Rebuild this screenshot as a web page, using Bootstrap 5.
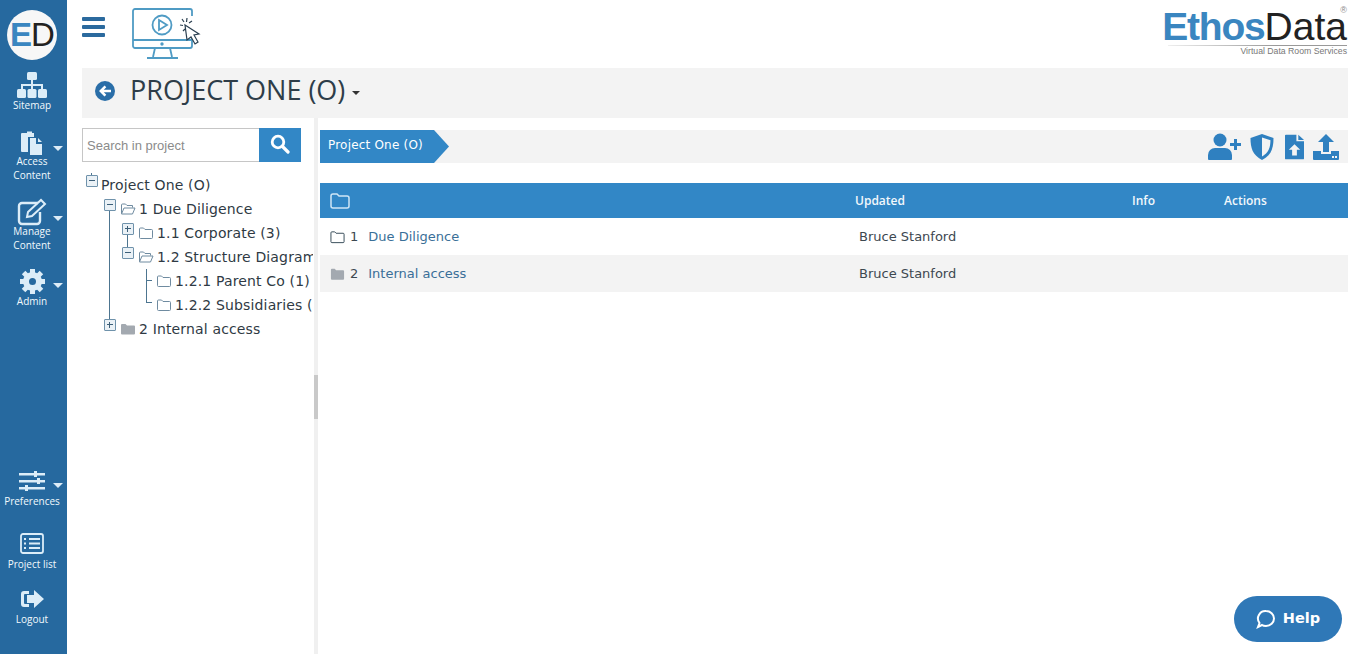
<!DOCTYPE html>
<html lang="en">
<head>
<meta charset="utf-8">
<title>Project One</title>
<link href="https://cdn.jsdelivr.net/npm/bootstrap@5.3.0/dist/css/bootstrap.min.css" rel="stylesheet">
<style>
html,body{height:100%;overflow:hidden}
body{background:#fff;font-family:"Open Sans",sans-serif;color:#333}
.shell{height:654px}
.side{width:67px;background:#26699f;color:#e6f3fb;flex:none;padding-top:10px}
.ed-logo{width:50px;height:50px;border-radius:50%;background:#f7f7f7;margin-left:7px;font-family:"Liberation Sans",sans-serif;font-size:33px;line-height:50px;text-align:center;letter-spacing:-1px;color:#222}
.ed-logo b{color:#3a86c0;font-weight:700}
.s-item{width:64px;position:relative;text-align:center;font-size:10px;font-weight:400;line-height:14px;color:#f2f9fd;text-decoration:none;display:block}
.s-item svg{display:block;margin:0 auto}
.s-lab{display:block}
.s-caret{position:absolute;right:1px;width:0;height:0;border-left:5px solid transparent;border-right:5px solid transparent;border-top:5px solid #dcecf7}
.i1{margin-top:12px}
.i2{margin-top:18px}.i3{margin-top:16px}.i4{margin-top:17px}
.i2 .s-lab,.i3 .s-lab{margin-top:-2px}
.i5 .s-lab{margin-top:2px}
.i6{margin-top:25px}.i7{margin-top:18px;margin-bottom:28px}
.i6 .s-lab,.i7 .s-lab{margin-top:3px}
.s-spacer{flex:1}
.main{flex:1;min-width:0;padding:0 14px 0 15px}
.topbar{height:68px}
.burger{width:23px;margin-top:17px}
.burger i{display:block;height:4px;background:#2b6a9e;margin-bottom:4px;border-radius:1px}
.monitor{margin:8px 0 0 27px}
.brand{margin-top:7px;text-align:right;font-family:"Liberation Sans",sans-serif;width:190px;padding-right:1px}
.brand-reg{display:block;font-size:9px;line-height:6px;height:6px;color:#888}
.brand-name{font-size:39px;line-height:28px;color:#222;height:33px;position:relative}
.brand-name::after{content:"";position:absolute;left:10px;right:0;bottom:0;height:1px;background:linear-gradient(90deg,#eee,#999 60%)}
.brand-name b{color:#3a86c0;letter-spacing:-1.2px}
.brand-sub{font-size:8.7px;line-height:10px;color:#777}
.titlebar{height:50px;background:#f3f3f3;padding:0 0 4px 13px}
.titlebar h1{font-size:27px;margin:0 0 2px 15px;font-weight:400;color:#2e3d49;font-family:"Open Sans",sans-serif}
.t-caret{width:0;height:0;border-left:4px solid transparent;border-right:4px solid transparent;border-top:4px solid #333;margin:4px 0 0 7px}
.work{height:536px}
.left{width:232px;flex:none;padding-top:10px;overflow:hidden}
.split{width:4px;background:#f0f0f0;flex:none;position:relative;margin-right:2px}
.split i{position:absolute;left:0;top:257px;width:4px;height:44px;background:#c9c9c9}
.searchbox{width:219px;height:34px}
.searchbox input{width:177px;height:34px;border:1px solid #c6c6c6;border-right:0;padding:0 4px;font-family:"Liberation Sans",sans-serif;font-size:13px;border-radius:0;outline:0}
.searchbox input::placeholder{color:#8b8b8b;opacity:1}
.searchbox button{width:42px;height:34px;background:#3287c6;border:0;border-radius:0;padding:0 0 2px}
.searchbox button svg{display:block;margin:0 auto}
.tree{margin-top:11px;font-family:"DejaVu Sans",sans-serif;font-size:14px;letter-spacing:.15px;color:#2f3a44;white-space:nowrap;position:relative;width:231px;overflow:hidden}
.t-row{height:24px;display:flex;align-items:center;position:relative}
.lv0{padding-left:4px}.lv1{padding-left:22px}.lv2{padding-left:40px}.lv3{padding-left:74px}
.tog{width:12px;height:12px;border:1px solid #6f92ab;border-radius:1px;background:#eaf1f6;position:relative;top:-4px;margin-right:4px;flex:none}
.tog::before{content:"";position:absolute;left:2px;right:2px;top:4px;height:1px;background:#3c5f78}
.tog.pl::after{content:"";position:absolute;top:2px;bottom:2px;left:4px;width:1px;background:#3c5f78}
.fold{margin-right:3px;flex:none}
.lv0 .tog{margin-right:3px}
.ln{position:absolute;background:#4d7590}
.right{flex:1;min-width:0;padding-top:12px}
.crumb{height:33px;background:#f3f3f3}
.crumb-p{background:#3287c6;color:#fff;height:33px;width:129px;font-family:"DejaVu Sans",sans-serif;font-size:12px;letter-spacing:.2px;line-height:30px;padding-left:8px;clip-path:polygon(0 0,114px 0,100% 50%,114px 100%,0 100%)}
.tools{padding-right:8px;gap:8px}
.t-user{margin-right:1px}.t-shield{margin-right:3px}
.gridtbl{margin:20px 0 0;table-layout:fixed;width:100%;border-collapse:collapse}
.gridtbl th{background:#3287c6;color:#f2f8fc;font-weight:600;font-size:12px;height:35px;padding:0 0 0 8px;border:0;vertical-align:middle}
.gridtbl td{height:37px;padding:0 0 0 12px;border:0;font-family:"DejaVu Sans",sans-serif;font-size:13px;color:#3d4850;vertical-align:middle;background:#fff}
.gridtbl tr.alt td{background:#f3f3f3}
.gridtbl td.nm{padding-left:10px}
.gridtbl a{color:#3a6f98;text-decoration:none;margin-left:10px}
.gridtbl td svg{vertical-align:-3px;margin-right:5px}
.helpbtn{position:fixed;left:1234px;top:596px;width:108px;height:46px;border-radius:23px;background:#2f78b7;color:#fff;font-family:"DejaVu Sans",sans-serif;font-weight:700;font-size:14.5px;border:0;gap:7px}
</style>
</head>
<body>
<div class="shell d-flex">
<nav class="side d-flex flex-column">
  <div class="ed-logo"><b>E</b>D</div>
  <a class="s-item i1" href="#">
    <svg width="32" height="26" viewBox="0 0 32 26" fill="#dcedf8"><rect x="11" y="0" width="10" height="8" rx="1.5"/><path d="M15 8h2v4h10v5h-2v-3H17v3h-2v-3H7v3H5v-5h10z"/><rect x="1" y="17" width="9" height="9" rx="1.5"/><rect x="11.5" y="17" width="9" height="9" rx="1.5"/><rect x="22" y="17" width="9" height="9" rx="1.5"/></svg>
    <span class="s-lab">Sitemap</span></a>
  <a class="s-item i2" href="#">
    <svg width="24" height="26" viewBox="0 0 24 26" fill="#dcedf8"><path d="M2 3h5V1.500h5V3h2v4H8v15H2a1 1 0 0 1-1-1V4a1 1 0 0 1 1-1z"/><path d="M10 8h6v6h6v11H10z"/><path d="M18 8l4 4h-4z"/></svg>
    <span class="s-lab">Access<br>Content</span>
    <i class="s-caret" style="top:16px"></i></a>
  <a class="s-item i3" href="#">
    <svg width="30" height="28" viewBox="0 0 30 28" fill="none" stroke="#dcedf8" stroke-width="2.400"><path d="M21 5H5a3 3 0 0 0-3 3v15a3 3 0 0 0 3 3h15a3 3 0 0 0 3-3V14"/><path d="M10 19l1-5L24 2l4 4-13 12z" stroke-width="2"/></svg>
    <span class="s-lab">Manage<br>Content</span>
    <i class="s-caret" style="top:18px"></i></a>
  <a class="s-item i4" href="#">
    <svg width="25" height="25" viewBox="0 0 25 25"><circle cx="12.500" cy="12.500" r="6.500" fill="none" stroke="#dcedf8" stroke-width="6"/><g stroke="#dcedf8" stroke-width="5"><path d="M12.500 0v5M12.500 20v5M0 12.500h5M20 12.500h5M3.600 3.600l3.500 3.500M18 18l3.500 3.500M21.400 3.600L18 7M7 18l-3.500 3.500"/></g></svg>
    <span class="s-lab">Admin</span>
    <i class="s-caret" style="top:14px"></i></a>
  <div class="s-spacer"></div>
  <a class="s-item i5" href="#">
    <svg width="26" height="22" viewBox="0 0 26 22" fill="#dcedf8"><rect y="3" width="26" height="2.500"/><rect y="10" width="26" height="2.500"/><rect y="17" width="26" height="2.500"/><rect x="15" y="1" width="3" height="6"/><rect x="18" y="8" width="3" height="6"/><rect x="6" y="15" width="3" height="6"/></svg>
    <span class="s-lab">Preferences</span>
    <i class="s-caret" style="top:13px"></i></a>
  <a class="s-item i6" href="#">
    <svg width="24" height="21" viewBox="0 0 24 21" fill="none" stroke="#dcedf8" stroke-width="1.800"><rect x="1" y="1" width="22" height="19" rx="2"/><path d="M9 6h11M9 10.500h11M9 15h11M4 6h2M4 10.500h2M4 15h2" stroke-width="2"/></svg>
    <span class="s-lab">Project list</span></a>
  <a class="s-item i7" href="#">
    <svg width="24" height="20" viewBox="0 0 24 20" fill="#dcedf8"><path d="M9 2H4a3 3 0 0 0-3 3v10a3 3 0 0 0 3 3h5v-3H5a1 1 0 0 1-1-1V6a1 1 0 0 1 1-1h4z"/><path d="M14 1l10 9-10 9v-5H7V6h7z"/></svg>
    <span class="s-lab">Logout</span></a>
</nav>
<main class="main">
  <header class="topbar d-flex">
    <div class="burger"><i></i><i></i><i></i></div>
    <svg class="monitor" width="70" height="52" viewBox="0 0 70 52" fill="none" stroke="#4f9bc4" stroke-width="1.800"><rect x="1" y="1" width="59" height="39" rx="2"/><path d="M1 32h59M23 40l-2 9M38 40l2 9M15 50h31"/><circle cx="30" cy="17" r="9.500"/><path d="M27 12l8 5-8 5z"/><circle cx="30" cy="36" r=".8"/><rect x="45" y="8" width="16" height="22" fill="#fff" stroke="none"/><path d="M53 17l14 9-5 1 4 7-3 2-4-7-4 3z" fill="#fff" stroke="#2a3f50" stroke-width="1.200"/><path d="M50 11l2 3M55 10l-.5 4M60 13l-3 2M48 17l3 .5M51 23l2-2" stroke="#2a3f50" stroke-width="1.200"/></svg>
    <div class="brand ms-auto">
      <span class="brand-reg">®</span>
      <div class="brand-name"><b>Ethos</b>Data</div>
      <div class="brand-sub">Virtual Data Room Services</div>
    </div>
  </header>
  <section class="titlebar d-flex align-items-center">
    <svg width="20" height="20" viewBox="0 0 20 20"><circle cx="10" cy="10" r="10" fill="#2a6ea8"/><path d="M9.500 4.500L4 10l5.500 5.500 1.800-1.800L8.800 11.300H16V8.700H8.800l2.500-2.400z" fill="#fff"/></svg>
    <h1>PROJECT ONE (O)</h1><span class="t-caret"></span>
  </section>
  <div class="work d-flex">
    <aside class="left">
      <form class="searchbox d-flex">
        <input type="text" placeholder="Search in project">
        <button type="button" aria-label="Search"><svg width="20" height="20" viewBox="0 0 20 20" fill="none" stroke="#fff" stroke-width="2.800"><circle cx="8" cy="8" r="5.800"/><path d="M12.500 12.500L18 18" stroke-linecap="round" stroke-width="3.200"/></svg></button>
      </form>
      <div class="tree">
        <span class="ln" style="left:9px;top:0;width:1px;height:5px"></span>
        <span class="ln" style="left:27px;top:26px;width:1px;height:124px"></span>
        <span class="ln" style="left:45px;top:50px;width:1px;height:26px"></span>
        <span class="ln" style="left:64px;top:96px;width:1px;height:34px"></span>
        <span class="ln" style="left:64px;top:107px;width:6px;height:1px"></span>
        <span class="ln" style="left:64px;top:129px;width:6px;height:1px"></span>
        <div class="t-row lv0"><span class="tog"></span>Project One (O)</div>
        <div class="t-row lv1"><span class="tog"></span><svg class="fold" width="16" height="14" viewBox="0 0 16 13" fill="none" stroke="#6f8ba0"><path d="M1.500 11V2.500a1 1 0 0 1 1-1h3l1.500 1.500h5.500v2M1.500 11.500l2.500-6h11l-2.500 6z"/></svg>1 Due Diligence</div>
        <div class="t-row lv2"><span class="tog pl"></span><svg class="fold" width="16" height="14" viewBox="0 0 16 13" fill="none" stroke="#6f8ba0"><path d="M1.500 11V2.500a1 1 0 0 1 1-1h3l1.500 1.500h6.500a1 1 0 0 1 1 1v7a1 1 0 0 1-1 1h-11a1 1 0 0 1-1-1z"/></svg>1.1 Corporate (3)</div>
        <div class="t-row lv2"><span class="tog"></span><svg class="fold" width="16" height="14" viewBox="0 0 16 13" fill="none" stroke="#6f8ba0"><path d="M1.500 11V2.500a1 1 0 0 1 1-1h3l1.500 1.500h5.500v2M1.500 11.500l2.500-6h11l-2.500 6z"/></svg>1.2 Structure Diagram</div>
        <div class="t-row lv3"><svg class="fold" width="16" height="14" viewBox="0 0 16 13" fill="none" stroke="#6f8ba0"><path d="M1.500 11V2.500a1 1 0 0 1 1-1h3l1.500 1.500h6.500a1 1 0 0 1 1 1v7a1 1 0 0 1-1 1h-11a1 1 0 0 1-1-1z"/></svg>1.2.1 Parent Co (1)</div>
        <div class="t-row lv3"><svg class="fold" width="16" height="14" viewBox="0 0 16 13" fill="none" stroke="#6f8ba0"><path d="M1.500 11V2.500a1 1 0 0 1 1-1h3l1.500 1.500h6.500a1 1 0 0 1 1 1v7a1 1 0 0 1-1 1h-11a1 1 0 0 1-1-1z"/></svg>1.2.2 Subsidiaries (2)</div>
        <div class="t-row lv1"><span class="tog pl"></span><svg class="fold" width="16" height="14" viewBox="0 0 16 13" fill="#a3a9b0"><path d="M1 2.500a1 1 0 0 1 1-1h3.500l1.500 1.500h7a1 1 0 0 1 1 1v7a1 1 0 0 1-1 1H2a1 1 0 0 1-1-1z"/></svg>2 Internal access</div>
      </div>
    </aside>
    <div class="split"><i></i></div>
    <section class="right">
      <div class="crumb d-flex align-items-center justify-content-between">
        <div class="crumb-p">Project One (O)</div>
        <div class="tools d-flex align-items-center">
          <svg class="t-user" width="33" height="27" viewBox="0 0 33 27" fill="#2f80c0"><circle cx="12" cy="7" r="6.500"/><path d="M0 26v-4a7 7 0 0 1 7-7h10a7 7 0 0 1 7 7v4a1 1 0 0 1-1 1H1a1 1 0 0 1-1-1z"/><path d="M26 6h3v4h4v3h-4v4h-3v-4h-4v-3h4z"/></svg>
          <svg class="t-shield" width="24" height="26" viewBox="0 0 23 26"><path d="M11.500 0L23 4c0 10-2 17-11.500 22C2 21 0 14 0 4z" fill="#2f80c0"/><path d="M11.500 3.500L20 6.300c-.2 7.500-2 12.500-8.500 16.300z" fill="#f3f3f3"/></svg>
          <svg width="19" height="26" viewBox="0 0 20 26" fill="#2f80c0"><path d="M0 1a1 1 0 0 1 1-1h11v7h8v18a1 1 0 0 1-1 1H1a1 1 0 0 1-1-1z"/><path d="M14 0l6 5.500h-6z"/><path d="M10 10l6 6h-3.500v6h-5v-6H4z" fill="#f3f3f3"/></svg>
          <svg width="28" height="26" viewBox="0 0 26 26" fill="#2f80c0"><path d="M13 0l8 8h-5v10h-6V8H5z"/><path d="M0 17h8v3h10v-3h8v8a1 1 0 0 1-1 1H1a1 1 0 0 1-1-1z"/><rect x="19" y="22" width="2" height="2" fill="#f3f3f3"/><rect x="22" y="22" width="2" height="2" fill="#f3f3f3"/></svg>
        </div>
      </div>
      <table class="table gridtbl">
        <colgroup><col style="width:527px"><col style="width:277px"><col style="width:92px"><col></colgroup>
        <thead><tr>
          <th style="padding-left:10px"><svg width="20" height="16" viewBox="0 0 20 16" fill="none" stroke="#cfe6f6" stroke-width="1.500" class="d-block"><path d="M1 13V3a2 2 0 0 1 2-2h4l2 2h8a2 2 0 0 1 2 2v8a2 2 0 0 1-2 2H3a2 2 0 0 1-2-2z"/></svg></th>
          <th>Updated</th><th>Info</th><th>Actions</th>
        </tr></thead>
        <tbody>
          <tr><td class="nm"><svg width="15" height="14" viewBox="0 0 16 14" fill="none" stroke="#2f4452"><path d="M1 12V2.500a1 1 0 0 1 1-1h3l1.500 1.500h7.500a1 1 0 0 1 1 1V12a1 1 0 0 1-1 1H2a1 1 0 0 1-1-1z"/></svg>1<a href="#">Due Diligence</a></td><td>Bruce Stanford</td><td></td><td></td></tr>
          <tr class="alt"><td class="nm"><svg width="15" height="14" viewBox="0 0 16 14" fill="#a3a9b0"><path d="M1 2.500a1 1 0 0 1 1-1h3l1.500 1.500h7.500a1 1 0 0 1 1 1V12a1 1 0 0 1-1 1H2a1 1 0 0 1-1-1z"/></svg>2<a href="#">Internal access</a></td><td>Bruce Stanford</td><td></td><td></td></tr>
        </tbody>
      </table>
    </section>
  </div>
</main>
</div>
<button class="helpbtn d-flex align-items-center justify-content-center" type="button"><svg width="20" height="20" viewBox="0 0 20 20" fill="none" stroke="#fff" stroke-width="2"><path d="M10 2a8 7.500 0 0 1 0 15c-1.500 0-3-.3-4-1l-4 2 1.500-4A7.500 7.500 0 0 1 10 2z"/></svg>Help</button>
<script src="https://cdn.jsdelivr.net/npm/bootstrap@5.3.0/dist/js/bootstrap.bundle.min.js"></script>
</body>
</html>
